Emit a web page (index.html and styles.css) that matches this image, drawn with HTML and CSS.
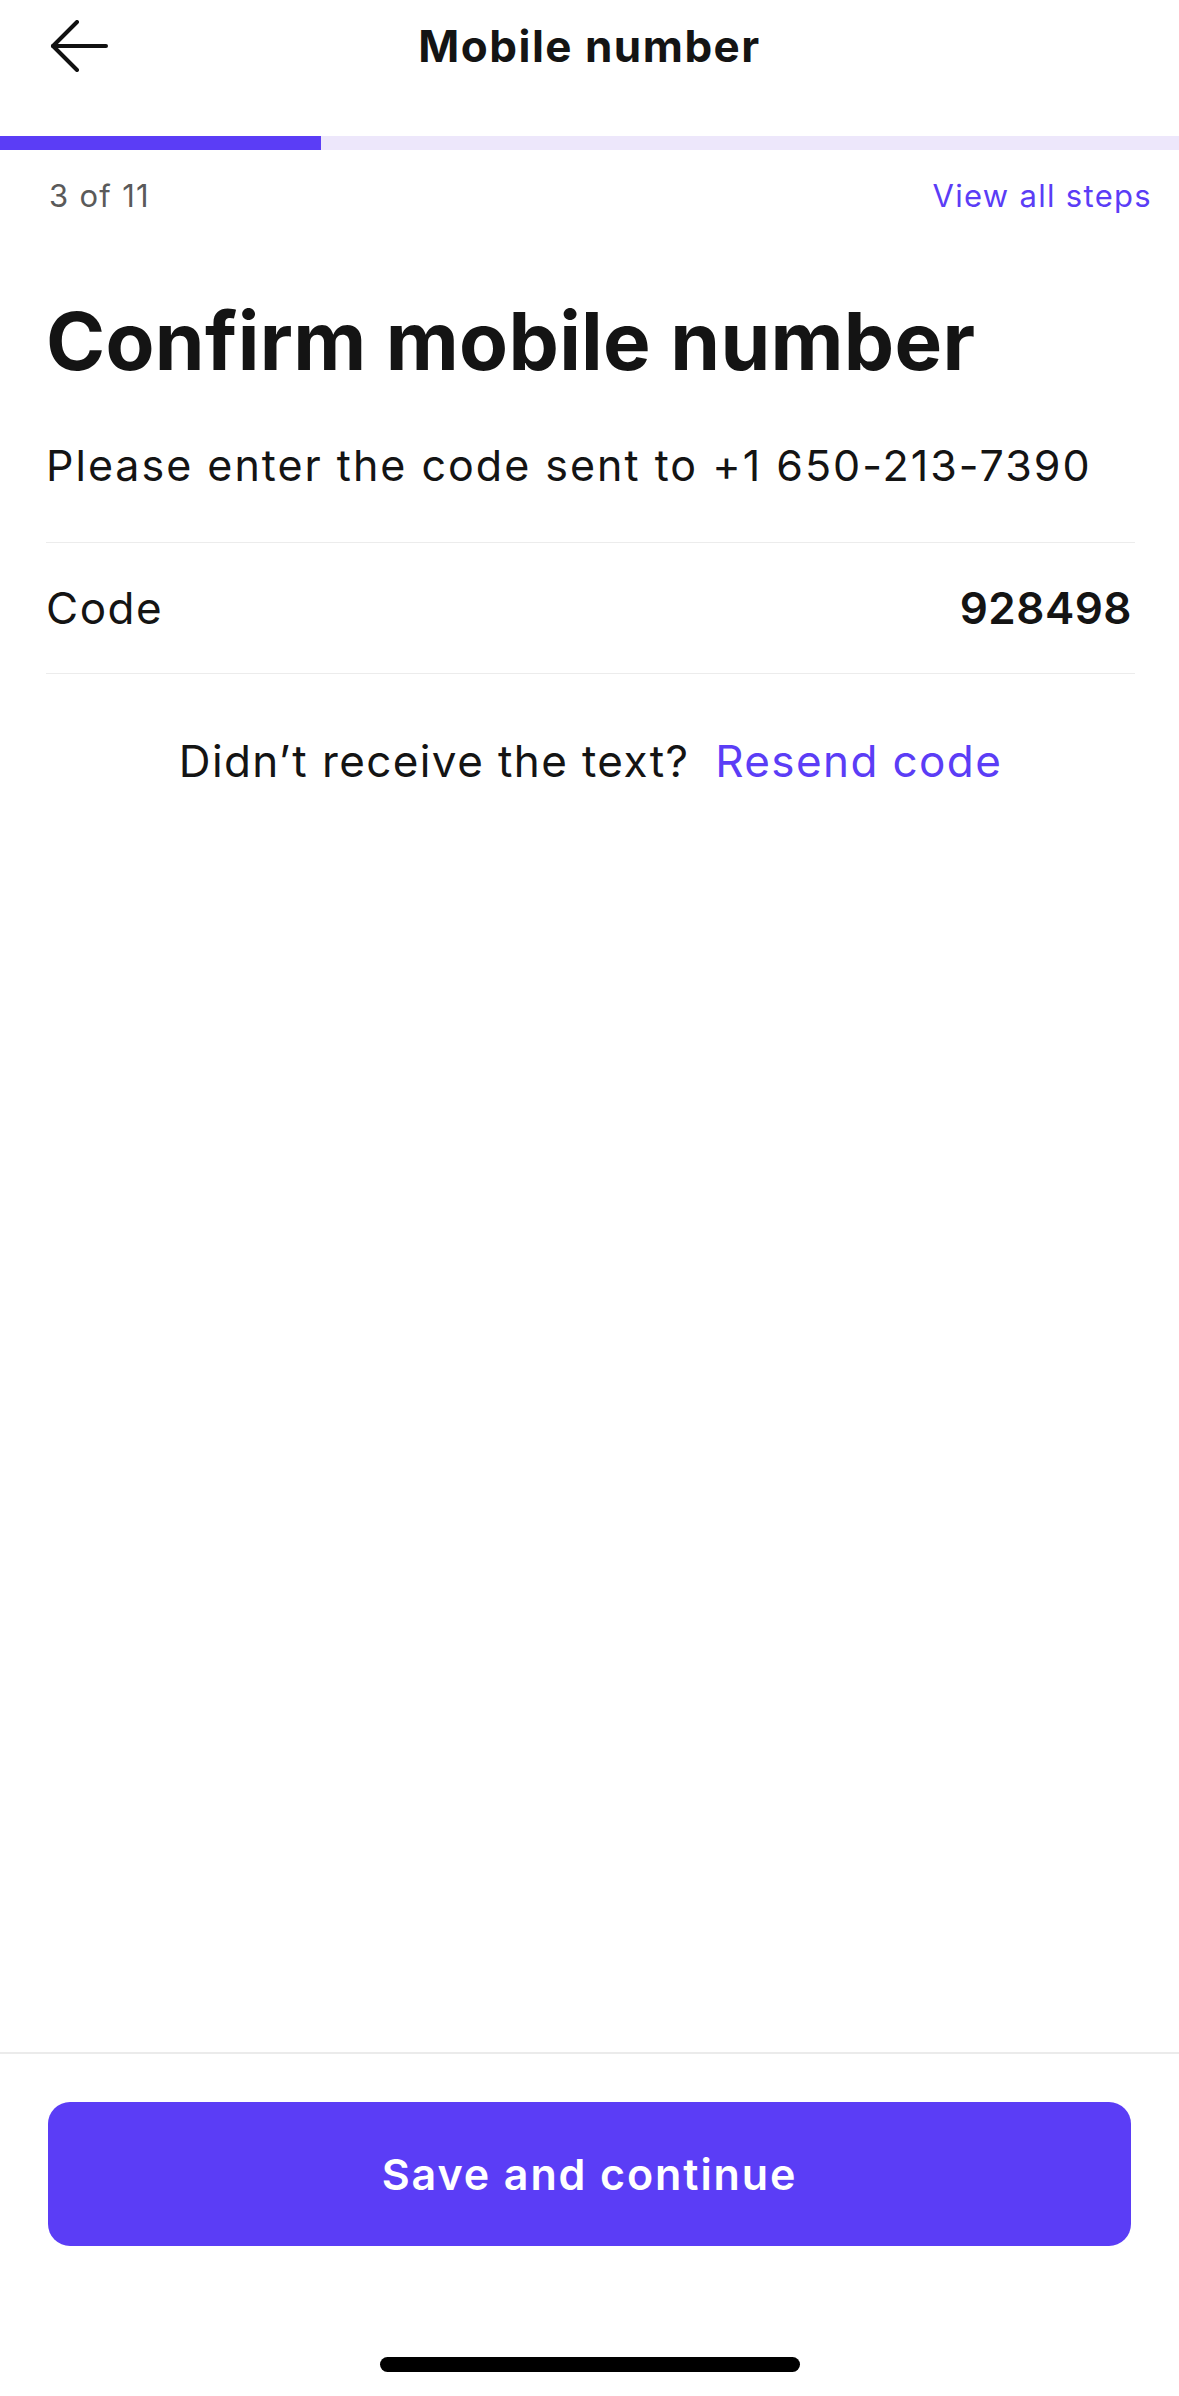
FILE: index.html
```html
<!DOCTYPE html>
<html lang="en">

<head>
    <meta charset="UTF-8">
    <meta name="viewport" content="width=device-width, initial-scale=1.0">
    <title>Mobile number</title>
    <link rel="stylesheet" href="styles.css">
</head>

<body>
    <div class="screen">
        <header class="topbar">
            <a class="back-button" href="#">
                <svg width="60" height="52" viewBox="0 0 60 52" fill="none" stroke="#111" stroke-width="4"
                    stroke-linecap="round" stroke-linejoin="round">
                    <path d="M27 2 L3 26 L27 50" />
                    <path d="M3 26 H56" />
                </svg>
            </a>
            <h1 class="topbar-title">Mobile number</h1>
            <span></span>
        </header>

        <div class="progress">
            <div class="progress-fill"></div>
        </div>

        <div class="step-row">
            <span class="step-count">3 of 11</span>
            <a class="step-link" href="#">View all steps</a>
        </div>

        <main class="content">
            <h2 class="page-title">Confirm mobile number</h2>
            <p class="page-text">Please enter the code sent to +1 650-213-7390</p>

            <div class="field-row">
                <span class="field-label">Code</span>
                <span class="field-value">928498</span>
            </div>

            <p class="resend">Didn’t receive the text? <a href="#">Resend code</a></p>
        </main>

        <footer class="footer">
            <button class="primary-button">Save and continue</button>
            <div class="home-indicator"></div>
        </footer>
    </div>
</body>

</html>
```

FILE: styles.css
```css
body {
    font-family: 'Inter', 'Liberation Sans', sans-serif;
    margin: 0;
    padding: 0;
    background-color: #fff;
    color: #141414;
}

.screen {
    display: flex;
    flex-direction: column;
    min-height: 2396px;
}

.topbar {
    display: grid;
    grid-template-columns: 1fr auto 1fr;
    align-items: center;
    height: 92px;
    margin-bottom: 44px;
}

.back-button {
    display: flex;
    padding-left: 50px;
}

.topbar-title {
    margin: 0;
    font-size: 44px;
    font-weight: 700;
    line-height: 52px;
    letter-spacing: 1.5px;
}

.progress {
    height: 14px;
    background-color: #ede7fb;
}

.progress-fill {
    width: 321px;
    height: 100%;
    background-color: #5b3df6;
}

.step-row {
    display: flex;
    justify-content: space-between;
    align-items: center;
    margin-top: 26px;
    padding: 0 27px 0 49px;
    font-size: 31px;
    line-height: 40px;
    letter-spacing: 1.3px;
}

.step-count {
    color: #5a5a5a;
}

.step-link {
    color: #5b3df6;
    text-decoration: none;
}

.content {
    flex: 1;
    padding: 0 44px 0 46px;
}

.page-title {
    margin: 77px 0 0;
    font-size: 80px;
    font-weight: 700;
    line-height: 96px;
    letter-spacing: 0.3px;
}

.page-text {
    margin: 48px 0 0;
    font-size: 43px;
    line-height: 56px;
    letter-spacing: 2px;
}

.field-row {
    display: flex;
    justify-content: space-between;
    align-items: center;
    height: 130px;
    margin-top: 49px;
    padding-right: 3px;
    border-top: 1px solid #ececec;
    border-bottom: 1px solid #ececec;
    font-size: 44px;
    letter-spacing: 1.5px;
}

.field-value {
    font-weight: 600;
    letter-spacing: 0.5px;
}

.resend {
    margin: 59px 0 0;
    text-align: center;
    font-size: 44px;
    line-height: 56px;
    letter-spacing: 1.4px;
}

.resend a {
    margin-left: 12px;
    color: #5b3df6;
    text-decoration: none;
}

.footer {
    border-top: 2px solid #ebebeb;
    padding-top: 48px;
    display: flex;
    flex-direction: column;
    align-items: center;
}

.primary-button {
    width: 1083px;
    height: 144px;
    border: none;
    border-radius: 22px;
    background-color: #5b3df6;
    color: white;
    font-family: inherit;
    font-size: 43px;
    font-weight: 600;
    letter-spacing: 1.9px;
    cursor: pointer;
}

.home-indicator {
    width: 420px;
    height: 15px;
    margin: 111px 0 24px;
    border-radius: 8px;
    background-color: #000;
}
```
